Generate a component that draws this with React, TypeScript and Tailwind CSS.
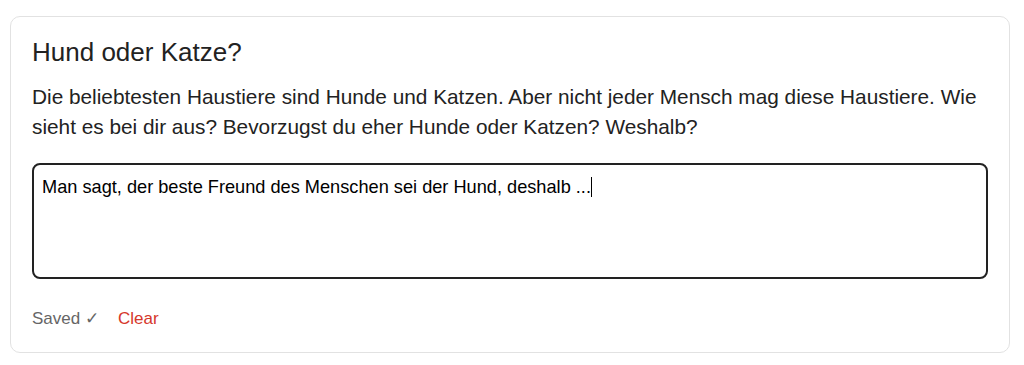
import React from "react";

export default function App() {
  return (
    <div className="w-[1024px] h-[365px] bg-white pt-[16px] pl-[10px]" style={{ fontFamily: '"Liberation Sans", Arial, sans-serif' }}>
      <div className="w-[1000px] rounded-[10px] border border-[#e2e2e2] pt-[20px] pb-[23px] px-[21px]">
        <h2 className="text-[26px] leading-[1.2] text-[#222]">Hund oder Katze?</h2>
        <p className="mt-[14px] text-[20.8px] leading-[30px] text-[#222]">
          Die beliebtesten Haustiere sind Hunde und Katzen. Aber nicht jeder Mensch mag diese Haustiere. Wie sieht es bei dir aus? Bevorzugst du eher Hunde oder Katzen? Weshalb?
        </p>
        <div className="mt-[21px] h-[116px] w-[956px] rounded-[8px] border-2 border-[#222] pt-[12px] px-[8px] text-[18.2px] leading-[normal] text-black">
          Man sagt, der beste Freund des Menschen sei der Hund, deshalb ...
          <span className="inline-block w-px h-[20px] bg-black align-[-4px]"></span>
        </div>
        <div className="mt-[29px] flex items-center gap-[19px] text-[17px] leading-[normal]">
          <span className="text-[#666]">Saved ✓</span>
          <button className="text-[#d6372b]">Clear</button>
        </div>
      </div>
    </div>
  );
}
